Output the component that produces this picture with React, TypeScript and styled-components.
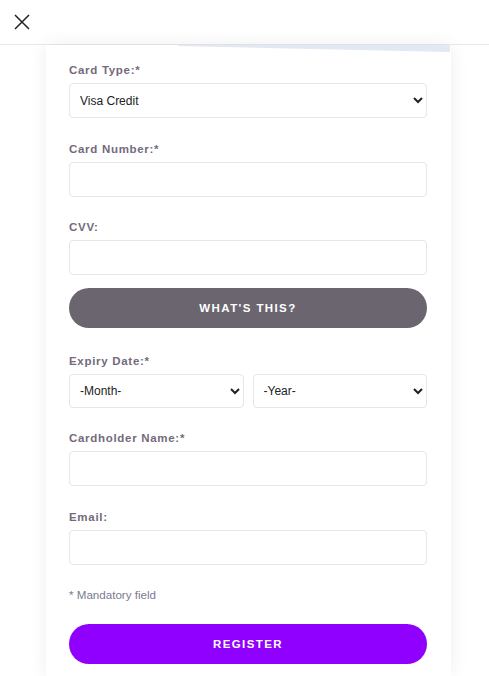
import React from "react";
import styled, { createGlobalStyle } from "styled-components";

const GlobalStyle = createGlobalStyle`
  html, body {
    margin: 0;
    padding: 0;
    background: #fff;
    font-family: "Liberation Sans", Arial, sans-serif;
  }
  * {
    box-sizing: border-box;
  }
`;

const Page = styled.div`
  display: flex;
  flex-direction: column;
  width: 489px;
  height: 676px;
  overflow: hidden;
  background: #fff;
`;

const Header = styled.div`
  display: flex;
  align-items: center;
  height: 45px;
  padding-left: 14px;
  border-bottom: 1px solid #e9e9ec;
  flex-shrink: 0;
`;

const CloseButton = styled.button`
  display: flex;
  align-items: center;
  justify-content: center;
  width: 16px;
  height: 16px;
  padding: 0;
  border: none;
  background: none;
  cursor: pointer;
`;

const Body = styled.div`
  display: flex;
  justify-content: center;
  flex: 1;
  padding-left: 8px;
`;

const Card = styled.div`
  position: relative;
  width: 405px;
  padding: 18px 24px 0 23px;
  background: #fff;
  box-shadow: 0 0 18px rgba(0, 0, 0, 0.07);

  &::before {
    content: "";
    position: absolute;
    top: 0;
    left: 132px;
    right: 1px;
    height: 7px;
    background: #e2e9f3;
    clip-path: polygon(0 0, 100% 0, 100% 100%, 0 15%);
  }
`;

const Field = styled.div<{ $gap?: number }>`
  display: flex;
  flex-direction: column;
  margin-bottom: ${(p) => p.$gap ?? 24}px;
`;

const Label = styled.label`
  display: block;
  font-size: 11.5px;
  line-height: 14px;
  font-weight: 700;
  letter-spacing: 0.7px;
  color: #746a7c;
  margin-bottom: 6px;
`;

const Input = styled.input`
  width: 100%;
  height: 35px;
  border: 1px solid #e6e6e9;
  border-radius: 4px;
  padding: 0 10px;
  font-family: "Liberation Sans", Arial, sans-serif;
  font-size: 12px;
  background: #fff;
  outline: none;
`;

const Select = styled.select<{ $h?: number }>`
  width: 100%;
  height: ${(p) => p.$h ?? 35}px;
  border: 1px solid #e6e6e9;
  border-radius: 4px;
  padding: 0 6px 0 6px;
  font-family: "Liberation Sans", Arial, sans-serif;
  font-size: 12px;
  color: #222;
  background: #fff;
  outline: none;
`;

const Row = styled.div`
  display: grid;
  grid-template-columns: 1fr 1fr;
  gap: 9px;
`;

const PillButton = styled.button<{ $bg: string }>`
  width: 100%;
  height: 40px;
  border: none;
  border-radius: 20px;
  background: ${(p) => p.$bg};
  color: #fff;
  font-family: "Liberation Sans", Arial, sans-serif;
  font-size: 11.5px;
  font-weight: 700;
  letter-spacing: 1.4px;
  text-transform: uppercase;
  cursor: pointer;
`;

const Note = styled.p`
  margin: 0 0 22px;
  font-size: 11.6px;
  line-height: 14px;
  color: #7b7a92;
`;

function CloseIcon() {
  return (
    <svg width="16" height="16" viewBox="0 0 16 16" fill="none">
      <path d="M1 1L15 15M15 1L1 15" stroke="#222" strokeWidth="1.5" />
    </svg>
  );
}

export default function App() {
  return (
    <>
      <GlobalStyle />
      <Page>
        <Header>
          <CloseButton aria-label="Close">
            <CloseIcon />
          </CloseButton>
        </Header>
        <Body>
          <Card>
            <Field>
              <Label>Card Type:*</Label>
              <Select defaultValue="visa-credit">
                <option value="visa-credit">Visa Credit</option>
                <option value="visa-debit">Visa Debit</option>
                <option value="mastercard">Mastercard</option>
              </Select>
            </Field>
            <Field $gap={23}>
              <Label>Card Number:*</Label>
              <Input type="text" />
            </Field>
            <Field $gap={13}>
              <Label>CVV:</Label>
              <Input type="text" />
            </Field>
            <Field $gap={26}>
              <PillButton $bg="#6b6570">What's this?</PillButton>
            </Field>
            <Field $gap={23}>
              <Label>Expiry Date:*</Label>
              <Row>
                <Select defaultValue="" $h={34}>
                  <option value="">-Month-</option>
                </Select>
                <Select defaultValue="" $h={34}>
                  <option value="">-Year-</option>
                </Select>
              </Row>
            </Field>
            <Field>
              <Label>Cardholder Name:*</Label>
              <Input type="text" />
            </Field>
            <Field $gap={23}>
              <Label>Email:</Label>
              <Input type="email" />
            </Field>
            <Note>* Mandatory field</Note>
            <PillButton $bg="#8f00ff">Register</PillButton>
          </Card>
        </Body>
      </Page>
    </>
  );
}
